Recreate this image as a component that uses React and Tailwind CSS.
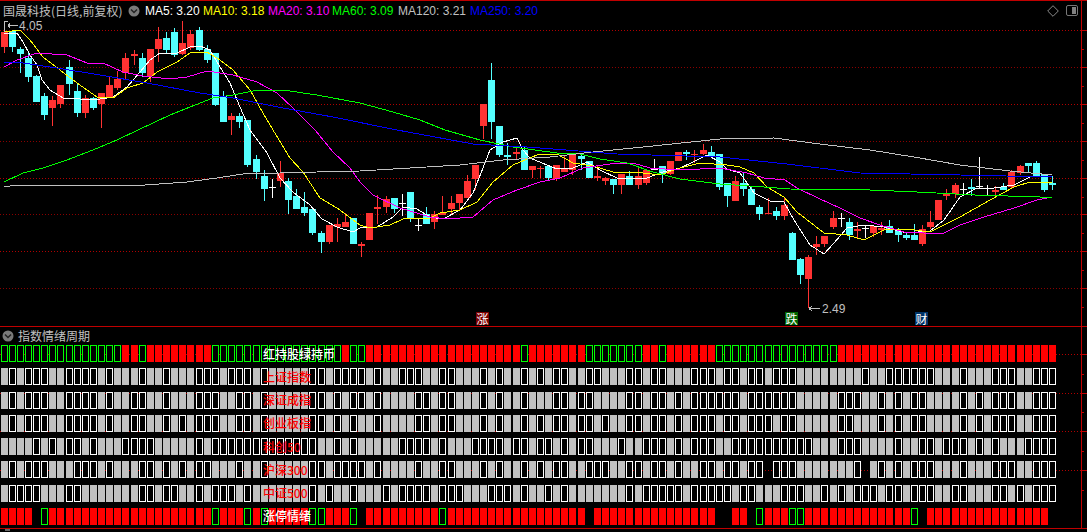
import React from "react";

const candles = [
  [1,"r",32,47,32,53],[9,"c",31,47,31,52],[17,"c",49,54,47,73],[25,"c",58,77,53,82],[33,"c",76,102,75,102],
  [41,"c",96,115,93,120],[49,"r",100,108,96,126],[57,"r",85,104,85,108],[66,"c",67,84,60,95],[74,"c",91,113,83,117],
  [82,"r",98,113,95,118],[90,"c",98,108,97,110],[98,"r",93,104,93,128],[106,"r",85,98,77,98],[114,"r",79,88,71,90],
  [122,"r",58,73,53,80],[131,"r",54,56,50,65],[139,"c",58,73,53,77],[147,"r",49,76,49,82],[155,"r",39,49,27,62],
  [163,"c",38,50,32,53],[171,"c",32,55,28,57],[179,"r",43,54,21,55],[187,"r",34,48,30,50],[196,"c",30,50,27,51],
  [204,"c",49,60,45,63],[212,"c",53,105,53,106],[220,"c",96,122,91,122],[228,"r",116,120,113,135],[236,"c",116,122,113,128],
  [244,"c",120,165,120,167],[253,"c",159,172,155,179],[261,"c",176,189,170,201],[269,"w",187,188,179,198],[277,"r",173,181,161,187],
  [285,"c",181,200,178,214],[293,"c",196,209,189,209],[301,"c",207,213,192,216],[309,"c",209,233,209,235],[318,"c",233,242,231,253],
  [326,"r",225,242,225,244],[334,"r",224,227,218,242],[342,"r",222,227,213,227],[350,"c",218,244,218,244],[358,"r",244,246,242,257],
  [366,"r",213,240,213,240],[374,"r",207,209,195,224],[383,"r",199,207,196,213],[391,"c",198,209,198,213],[399,"w",203,204,194,216],
  [407,"c",192,219,192,222],[415,"w",225,226,219,231],[423,"c",214,224,207,224],[431,"r",214,222,211,229],[439,"r",213,215,196,215],
  [448,"r",203,209,196,214],[456,"r",194,203,194,210],[464,"r",181,198,175,198],[472,"r",165,179,165,190],[480,"r",104,126,104,139],
  [488,"c",80,122,63,139],[496,"c",126,155,126,157],[504,"c",155,157,143,165],[513,"r",152,154,148,159],[521,"c",150,170,146,170],
  [529,"r",166,170,166,178],[537,"r",168,169,166,178],[545,"c",166,178,166,181],[553,"r",165,179,165,181],[561,"r",169,172,155,172],
  [569,"r",155,170,154,175],[578,"c",156,159,153,170],[586,"c",161,178,161,178],[594,"r",176,178,165,181],[602,"r",178,181,177,185],
  [610,"c",179,185,179,194],[618,"r",174,185,174,194],[626,"c",176,185,171,185],[635,"r",176,185,166,189],[643,"r",170,183,169,185],
  [651,"w",169,170,159,170],[659,"c",166,174,166,183],[667,"r",161,174,161,175],[675,"r",152,161,152,161],[683,"c",152,154,150,160],
  [691,"r",154,155,150,163],[700,"r",150,154,144,155],[708,"c",152,157,146,157],[716,"c",154,187,154,190],[724,"c",183,196,183,207],
  [732,"r",181,201,176,201],[740,"c",183,189,172,196],[748,"c",189,205,187,205],[756,"c",207,214,205,220],[765,"r",213,214,198,214],
  [773,"c",211,216,207,220],[781,"r",205,216,198,220],[789,"c",233,260,232,260],[797,"c",259,275,258,284],[805,"r",257,279,255,308],
  [813,"r",244,247,236,255],[821,"r",236,244,236,247],[830,"r",218,227,211,229],[838,"w",218,219,213,227],[846,"c",222,235,218,240],
  [854,"r",229,231,222,238],[862,"w",228,229,226,238],[870,"r",226,233,225,237],[878,"r",228,230,222,235],[886,"c",226,233,220,233],
  [895,"c",231,235,228,242],[903,"c",235,238,233,240],[911,"c",235,240,224,240],[919,"r",229,244,225,246],[927,"r",222,227,211,229],
  [935,"r",200,220,200,220],[943,"r",193,196,189,200],[952,"r",185,194,183,198],[960,"w",189,190,183,194],[968,"c",187,189,179,196],
  [976,"w",186,187,157,188],[984,"w",188,189,185,195],[992,"r",190,192,186,196],[1000,"c",187,190,183,190],[1008,"r",172,187,170,189],
  [1017,"r",166,173,165,175],[1025,"c",163,166,163,172],[1033,"c",163,177,161,177],[1041,"c",174,190,174,192],[1049,"c",183,185,176,190],
];

const candleColors = { r: "#ff3232", c: "#54ffff", w: "#ffffff" };

const maLines = [
  { color: "#ffffff", points: "4,33 17,33 23,42 30,55 37,65 42,80 50,90 63,98 80,99 100,99 113,97 127,87 140,72 150,60 160,53 177,53 190,47 200,46 210,50 220,67 230,83 240,107 250,130 267,153 280,178 293,192 310,205 322,219 337,227 353,232 360,228 377,227 393,217 403,207 417,209 430,217 443,219 460,210 473,193 483,168 490,150 503,142 517,138 523,150 530,158 547,165 557,169 573,168 587,162 600,170 617,178 647,178 663,172 680,168 693,162 707,155 720,162 727,169 740,173 754,193 770,201 784,202 794,220 810,245 824,254 834,243 847,228 864,225 884,227 907,233 930,231 944,220 960,197 977,188 994,188 1014,185 1030,177 1052,176" },
  { color: "#ffff00", points: "4,32 20,30 30,40 43,57 60,70 77,83 97,97 113,98 127,88 143,83 157,72 177,62 190,53 207,52 220,60 233,70 250,90 263,113 273,130 290,158 303,172 320,198 337,208 360,225 370,228 390,225 403,219 430,218 440,213 460,210 477,202 493,182 513,165 537,155 557,154 573,163 593,166 613,172 643,173 660,175 680,168 700,163 727,165 740,167 754,173 767,187 784,197 797,212 824,233 847,235 864,240 884,230 907,229 930,232 960,217 990,200 1014,187 1030,182 1052,182" },
  { color: "#ff00ff", points: "4,67 17,60 37,53 67,55 87,63 103,63 123,72 143,76 170,79 187,77 207,71 233,75 257,82 277,93 293,108 315,130 333,152 350,168 360,182 373,195 400,208 430,217 447,219 473,217 493,200 517,190 540,182 560,178 583,168 610,164 633,163 650,168 680,170 720,168 747,173 764,178 785,180 797,188 820,199 840,208 860,218 880,225 904,232 924,233 944,233 960,225 984,217 1014,208 1037,200 1052,197" },
  { color: "#00ff00", points: "4,182 23,173 43,168 67,160 93,150 117,140 138,130 170,115 190,107 213,98 233,95 253,91 283,90 317,95 360,103 393,112 420,120 445,130 480,140 513,147 557,153 580,154 600,159 627,163 653,172 680,179 720,184 764,187 790,189 870,190 917,192 975,195 1040,197 1052,197" },
  { color: "#c0c0c0", points: "4,187 17,185 145,185 187,182 217,178 243,174 317,172 360,171 410,168 460,165 503,160 550,157 593,152 643,147 720,139 774,138 820,144 870,150 914,157 960,165 1010,171 1052,175" },
  { color: "#0000ff", points: "4,62 23,63 57,68 100,75 147,83 200,93 233,98 283,108 333,117 397,130 473,144 527,147 617,154 720,157 787,164 860,173 960,175 1052,177" },
];

const legend = [
  { text: "MA5: 3.20", color: "text-white", width: "w-[58px]" },
  { text: "MA10: 3.18", color: "text-[#ffff00]", width: "w-[65px]" },
  { text: "MA20: 3.10", color: "text-[#ff00ff]", width: "w-[64px]" },
  { text: "MA60: 3.09", color: "text-[#00ff00]", width: "w-[66px]" },
  { text: "MA120: 3.21", color: "text-[#c0c0c0]", width: "w-[72px]" },
  { text: "MA250: 3.20", color: "text-[#0000ff]", width: "w-[70px]" },
];

// one letter per column: g/r outlined green or filled red, o/f outlined white or filled gray, . nothing
const rows = [
  { label: "红持股绿持币", color: "text-white", cells: "ggggggggggggggg rr g rrrrrrrr gggggggggggggggg r gg rrrrrrrrrrrrrrrrrrr g rrrrrrr ggggggg rr g rrrrrr ggggggggggggggg rrrrrrrrrrrrrrrrrrrrrrrrrrr" },
  { label: "上证指数", color: "text-[#ff0000]", cells: "fofooo ff oooo f o fff o ff o fff ooo f ooo f o fffff oo f oooo fo ff ooo ff oo fff o f o ff o f o f oo ff oo fff oo f oo fff ooo f oo f oo f ooo ffffffff o ff oooooo fff o fff ooo ff ooo" },
  { label: "深证成指", color: "text-[#ff0000]", cells: "fofooo ff oooo f o ff oo ff o fff ooo ff oo f o fffff oo f o f oo fo ffff oo f oo fff o f o ff o fff oo f oo ffff oo f oo f o f ooo ooo f oooooo fffff ooo ff o f o f oo ffff o f o f ooo ff ooo" },
  { label: "创业板指", color: "text-[#ff0000]", cells: "fofooo ff oooo f o ff oo ff o f o f ooo ff oo f o fffff oo f o f o f fo ffff oo f oo fff o f o ff o f o f oo f oo f o ff oo f oo f o f ooo f oo f ooo f oo fffff oo fff o f o f oo ffff o f o f ooo ff ooo" },
  { label: "科创50", color: "text-[#ff0000]", cells: "ffff o f o f oo f o fff oooo fffff o f ooooooooooooo ff o f o f ffff oooo f o fff oooo f oo f oo f o f oo fff o ff ooo f o f ooo ff oooooooooo fff ooo ffff o ff oo f ooo f o f o fff oooo" },
  { label: "沪深300", color: "text-[#ff0000]", cells: "fofooo fff ooo f o fff oo f o f o f oo fff o ff o fffff oo f oooo fo ffff o ff oo fff o f o ff o f o f oo ff ooo ff oo f oo f o ff oo f oo f oo . ooo fffffff o . f o f o f ooo fff o fff ooo ff ooo" },
  { label: "中证500", color: "text-[#ff0000]", cells: "f oooo fff oo fffffff oo f oo ff o f ooo f o fffffff o f o ff o f ff o f oooo f ooo fff ooo f o ff o f o fffffff o f ooooo f ooo oo f oo fff ooo ff o f o f ooo f oo f ooo ff oo fff oo f o f ooo" },
  { label: "涨停情绪", color: "text-white", cells: "rrrr . g rrrrrrrrrrrrrrrrrrrr g rrr g r g rrrrr gg rrr g . rrrrrrrrr g rrrrrrrrrrrrrrrrr . rrrrrrrrrrrrrrr .. rr . g rrr gg rrrrrrrrrrrrr g . rrrrrrrrrrrrrrr ." },
];

const cjk = "font-['Noto_Sans_CJK_SC','Liberation_Sans',sans-serif]";
const latin = "font-['Liberation_Sans','Noto_Sans_CJK_SC',sans-serif]";

const ChevronDot = () => (
  <svg width="12" height="12" viewBox="0 0 12 12" className="shrink-0">
    <circle cx="6" cy="6" r="5.5" fill="#7a7a7a" />
    <path d="M3 4.5 L6 7.5 L9 4.5" fill="none" stroke="#222222" strokeWidth="1.5" />
  </svg>
);

const SignalRow = ({ cells }) => {
  const list = cells.replace(/ /g, "");
  return (
    <svg width="1087" height="17" viewBox="0 0 1087 17" className="block" shapeRendering="crispEdges">
      {candles.map(([x], i) => {
        const c = list[i];
        if (c === "r") return <rect key={i} x={x} y="0" width="7" height="17" fill="#ff0000" />;
        if (c === "f") return <rect key={i} x={x} y="0" width="7" height="17" fill="#c0c0c0" />;
        if (c === "g" || c === "o")
          return (
            <g key={i}>
              <rect x={x} y="0" width="7" height="17" fill={c === "g" ? "#00ff00" : "#ffffff"} />
              <rect x={x + 1} y="1" width="5" height="15" fill="#000000" />
            </g>
          );
        return null;
      })}
    </svg>
  );
};

const PriceChart = () => {
  const grid = [30, 67, 104, 141, 178, 214, 251, 288];
  const minor = [49, 86, 123, 160, 197, 233, 270, 307];
  return (
    <svg width="1087" height="326" viewBox="0 0 1087 326" className="absolute left-0 top-0" shapeRendering="crispEdges">
      {grid.map((y, i) => (
        <g key={y}>
          <line x1="0" x2="1081" y1={y + 0.5} y2={y + 0.5} stroke={i % 2 ? "#8a0000" : "#b00000"} strokeDasharray="1 2" />
          <line x1="1081" x2="1087" y1={y + 0.5} y2={y + 0.5} stroke="#c00000" />
        </g>
      ))}
      {minor.map((y) => (
        <line key={y} x1="1081" x2="1084" y1={y + 0.5} y2={y + 0.5} stroke="#c00000" />
      ))}
      <line x1="1081.5" x2="1081.5" y1="0" y2="326" stroke="#c00000" />
      {candles.map(([x, kind, top, bottom, wickTop, wickBottom]) => (
        <g key={x} fill={candleColors[kind]}>
          <rect x={x + 3} y={wickTop} width="1" height={wickBottom - wickTop} />
          <rect x={x} y={top} width="7" height={bottom - top} />
        </g>
      ))}
      {maLines.map((line) => (
        <polyline key={line.color} points={line.points} fill="none" stroke={line.color} strokeWidth="1" />
      ))}
      {/* high and low markers */}
      <path d="M4.5 32 V21.5 H8 M8 25.5 H18 M8 25.5 L10 23.5 M8 25.5 L10 27.5" fill="none" stroke="#c0c0c0" />
      <path d="M809 308.5 H820 M809 308.5 L812 306 M809 308.5 L812 311" fill="none" stroke="#c0c0c0" />
    </svg>
  );
};

const Tag = ({ text, className }) => (
  <span className={`absolute top-[312px] flex h-[13px] w-[13px] items-center justify-center text-[12px] leading-none text-white ${cjk} ${className}`}>
    {text}
  </span>
);

export default function App() {
  return (
    <div className="flex h-[532px] w-[1087px] flex-col overflow-hidden bg-black">
      <div className="relative h-[326px] shrink-0">
        <PriceChart />
        <div className="relative h-px bg-[#c00000]" />
        <div className="relative flex h-[19px] items-center pl-[3px]">
          <span className={`w-[125px] text-[12px] leading-none whitespace-nowrap text-[#c0c0c0] ${cjk}`}>
            国晟科技(日线,前复权)
          </span>
          <ChevronDot />
          <div className={`ml-[5px] flex text-[12px] leading-none ${latin}`}>
            {legend.map((item) => (
              <span key={item.text} className={`whitespace-nowrap ${item.width} ${item.color}`}>
                {item.text}
              </span>
            ))}
          </div>
          <svg width="12" height="12" viewBox="0 0 12 12" className="absolute left-[1047px] top-[4px]">
            <path d="M6 0.7 L11.3 6 L6 11.3 L0.7 6 Z" fill="none" stroke="#8a8a8a" />
          </svg>
          <div className="absolute left-[1066px] top-[4px] flex h-[11px] w-[12px] justify-end rounded-[2px] border border-[#777777] p-px">
            <div className="h-full w-[4px] bg-[#808080]" />
          </div>
        </div>
        <span className={`absolute left-[19px] top-[20px] text-[12px] leading-[13px] text-[#c0c0c0] ${latin}`}>4.05</span>
        <span className={`absolute left-[822px] top-[303px] text-[12px] leading-[13px] text-[#c0c0c0] ${latin}`}>2.49</span>
        <Tag text="涨" className="left-[476px] bg-[#7a0000]" />
        <Tag text="跌" className="left-[785px] bg-[#006400]" />
        <Tag text="财" className="left-[915px] bg-[#003366]" />
      </div>

      <div className="relative h-[203px] shrink-0 border-y border-[#c00000]">
        <svg width="1087" height="201" viewBox="0 0 1087 201" className="absolute left-0 top-0" shapeRendering="crispEdges">
          {[27, 66, 104, 143].map((y) => (
            <g key={y}>
              <line x1="0" x2="1081" y1={y + 0.5} y2={y + 0.5} stroke="#b00000" strokeDasharray="1 2" />
              <line x1="1081" x2="1087" y1={y + 0.5} y2={y + 0.5} stroke="#c00000" />
            </g>
          ))}
          {[47, 85, 124, 163].map((y) => (
            <line key={y} x1="1081" x2="1084" y1={y + 0.5} y2={y + 0.5} stroke="#c00000" />
          ))}
          <line x1="1081.5" x2="1081.5" y1="0" y2="201" stroke="#c00000" />
        </svg>
        <div className="relative flex h-[18px] items-center gap-[4px] pl-[2px]">
          <ChevronDot />
          <span className={`text-[12px] leading-none text-[#c0c0c0] ${cjk}`}>指数情绪周期</span>
        </div>
        <div className="relative flex flex-col gap-[6.28px]">
          {rows.map((row) => (
            <div key={row.label} className="relative h-[17px]">
              <SignalRow cells={row.cells} />
              <span className={`absolute left-[263px] top-0 flex h-[17px] items-center text-[12px] font-medium leading-none whitespace-nowrap ${row.color} ${cjk}`}>
                {row.label}
              </span>
            </div>
          ))}
        </div>
      </div>
      <div className="ml-[5px] h-[2px] w-[5px] bg-[#666666]" />
    </div>
  );
}
